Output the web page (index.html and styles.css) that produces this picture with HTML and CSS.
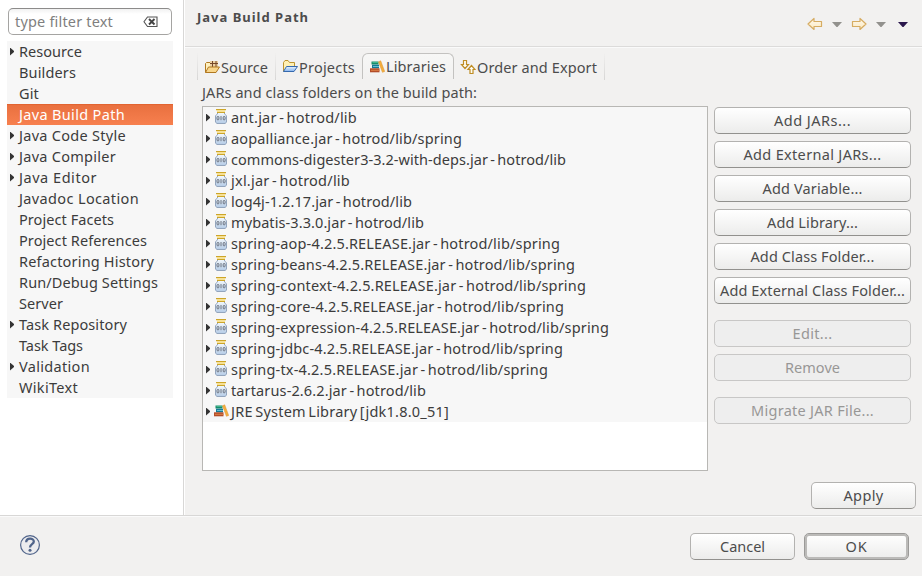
FILE: index.html
```
<!DOCTYPE html>
<html lang="en">
<head>
<meta charset="utf-8">
<title>Java Build Path</title>
<link rel="stylesheet" href="styles.css">
</head>
<body>
<svg class="defs" width="0" height="0">
  <defs>
    <linearGradient id="glass" x1="0" y1="0" x2="0" y2="1"><stop offset="0" stop-color="#f4f9fd"/><stop offset="1" stop-color="#b4cbe6"/></linearGradient>
    <linearGradient id="cream" x1="0" y1="0" x2="0" y2="1"><stop offset="0" stop-color="#fffaf0"/><stop offset="1" stop-color="#fbe8bd"/></linearGradient>
    <linearGradient id="blue" x1="0" y1="0" x2="0" y2="1"><stop offset="0" stop-color="#e9f3fd"/><stop offset="1" stop-color="#84b3ee"/></linearGradient>
    <symbol id="jar" viewBox="0 0 16 16">
      <path d="M4.500 3.500h7v1.500l2 1.700v6.500l-1.500 1.300H4l-1.500-1.300V6.700l2-1.700z" fill="url(#glass)" stroke="#93a5bd"/>
      <path d="M3 .7h10M4 3.300h8" stroke="#cda528" stroke-width="1.200"/><path d="M4 2h8" stroke="#f9e184" stroke-width="1.400"/>
      <g fill="none" stroke="#555b66" stroke-width=".8"><rect x="4" y="7.500" width="1.900" height="3.300" rx=".7"/><path d="M8 7v4.200"/><rect x="10.200" y="7.500" width="1.900" height="3.300" rx=".7"/></g>
    </symbol>
    <symbol id="books" viewBox="0 0 16 16">
      <path d="M2.500 2.500h7v3h-7z" fill="#168c68"/><path d="M3.500 3.500h6" stroke="#42b690"/>
      <path d="M3 5.700h7v3.600H3z" fill="#147a96"/><path d="M4 7.500h6" stroke="#65bfd0"/>
      <path d="M1 9.300h9.500v4H1z" fill="#b34d28"/><path d="M2 11.300h8.500" stroke="#dd8047"/>
      <path d="M9.500 2.800l2.200-1 4 10.700-2.300.8z" fill="#f3ae3d" stroke="#dc9330" stroke-width=".5"/>
    </symbol>
    <symbol id="down" viewBox="0 0 10 6"><path d="M0 0h10L5.500 5h-1z" fill="currentColor"/></symbol>
  </defs>
</svg>
<div class="upper">
  <aside class="side">
    <div class="filter"><span class="fit" data-w="98">type filter text</span>
      <svg width="15" height="12" viewBox="0 0 15 12"><path d="M4.500 1h9.500v9.500H4.500L1 5.800z" fill="#fff" stroke="#555" stroke-width="1.100"/><path d="M6 3l5.500 5.500M11.500 3L6 8.500" stroke="#444" stroke-width="1.900"/></svg>
    </div>
    <ul class="tree" id="tree"></ul>
  </aside>
  <main class="main">
    <header class="head">
      <h1><span class="fit" data-w="112">Java Build Path</span></h1>
      <nav class="nav">
        <svg width="16" height="14" viewBox="0 0 16 14"><path d="M1 7l6-5.500v3h7.500v5H7v3z" fill="url(#cream)" stroke="#d6ac62" stroke-linejoin="round" stroke-width="1.200"/></svg>
        <svg class="arr first" width="10" height="6"><use href="#down"/></svg>
        <svg width="16" height="14" viewBox="0 0 16 14"><path d="M15 7L9 1.500v3H1.500v5H9v3z" fill="url(#cream)" stroke="#d6ac62" stroke-linejoin="round" stroke-width="1.200"/></svg>
        <svg class="arr" width="10" height="6"><use href="#down"/></svg>
        <svg class="arr dark" width="10" height="6"><use href="#down"/></svg>
      </nav>
    </header>
    <div class="tabs">
      <div class="tab source">
        <svg width="16" height="16" viewBox="0 0 16 16"><path d="M1.500 13.500v-9l1-1h4l1 1.500h6v2" fill="#fff0bd" stroke="#b17820"/><path d="M6 2h8v6H6z" fill="#ecd0a1"/><path d="M6 4.500h8M8.500 2v6M12 2v6" stroke="#754729"/><path d="M1.500 13.500l3-5.500h11l-3.500 5.500z" fill="#f9d68b" stroke="#b17820"/></svg>
        <span class="fit" data-w="47">Source</span></div>
      <div class="tab projects">
        <svg width="16" height="16" viewBox="0 0 16 16"><path d="M1.500 12.500v-9l1.500-2h3l1.500 2h5v4" fill="#fff0b3" stroke="#bd932f"/><path d="M1.500 12.500l3-5h11l-3.500 5z" fill="url(#blue)" stroke="#3569ae"/></svg>
        <span class="fit" data-w="56">Projects</span></div>
      <div class="tab active">
        <svg width="16" height="16"><use href="#books"/></svg>
        <span class="fit" data-w="60">Libraries</span></div>
      <div class="tab order">
        <svg width="16" height="16" viewBox="0 0 16 16"><g fill="#fffdf3" stroke="#bf8d24" stroke-width="1.200"><path d="M3.500 1.500h3v4h2L5 9.500 1.500 5.500h2z"/><path d="M10 14.500h3v-4h2l-3.500-4L8 10.500h2z"/></g></svg>
        <span class="fit" data-w="120">Order and Export</span></div>
    </div>
    <p class="caption"><span class="fit" data-w="275">JARs and class folders on the build path:</span></p>
    <div class="body">
      <ul class="jars" id="jars"></ul>
      <div class="actions">
        <button><span class="fit" data-w="77">Add JARs...</span></button>
        <button><span class="fit" data-w="138">Add External JARs...</span></button>
        <button><span class="fit" data-w="100">Add Variable...</span></button>
        <button><span class="fit" data-w="91">Add Library...</span></button>
        <button><span class="fit" data-w="124">Add Class Folder...</span></button>
        <button><span class="fit" data-w="185">Add External Class Folder...</span></button>
        <button class="gap" disabled><span class="fit" data-w="40">Edit...</span></button>
        <button disabled><span class="fit" data-w="55">Remove</span></button>
        <button class="gap" disabled><span class="fit" data-w="123">Migrate JAR File...</span></button>
      </div>
    </div>
    <div class="apply"><button><span class="fit" data-w="40">Apply</span></button></div>
  </main>
</div>
<footer class="foot">
  <svg class="help" width="22" height="22" viewBox="0 0 22 22"><circle cx="11" cy="11" r="9.400" fill="#ececee" stroke="#50648a" stroke-width="1.200"/><path d="M7.200 8.300C7.200 3.600 15 3.700 14.800 7.600c-.1 2.700-3.800 2.400-3.800 5.800" fill="none" stroke="#50648a" stroke-width="2.300"/><circle cx="11" cy="16.300" r="1.500" fill="#50648a"/></svg>
  <button><span class="fit" data-w="45">Cancel</span></button>
  <button class="ok"><span class="fit" data-w="22">OK</span></button>
</footer>
<script src="script.js"></script>
</body>
</html>
```
FILE: styles.css
```
* { box-sizing: border-box; }
body { margin: 0; width: 922px; height: 576px; overflow: hidden; display: flex; flex-direction: column; background: #f2f1f0; color: #4c4c4c; font: 14.5px/21px "Noto Sans", "Open Sans", sans-serif; }
.defs { position: absolute; }
svg { flex: none; display: block; }
ul { list-style: none; margin: 0; padding: 0; }
.fit { display: inline-block; white-space: pre; }
.upper { display: flex; height: 515px; }
.side { width: 184px; background: #fff; border-right: 1px solid #d8d7d6; padding: 8px 10px 0 7px; }
.filter { display: flex; align-items: center; justify-content: space-between; width: 164px; height: 27px; margin-left: 1px; padding: 0 13px 0 6px; border: 1px solid #a5a4a2; border-top-color: #8c8b8a; border-radius: 5px; background: linear-gradient(#f1f1f1, #fff 5px); color: #7f7f7f; }
.tree { margin-top: 6px; width: 166px; background: #f7f7f7; color: #3c3c3c; }
.tree li { height: 21px; display: flex; align-items: center; padding-left: 3px; }
.twist { width: 4px; height: 8px; margin-right: 5px; }
.twist.on { background: #333; clip-path: polygon(0 0, 100% 43%, 100% 57%, 0 100%); }
.tree .sel { background: linear-gradient(#e26431 1px, #e9703f 1px, #f7804f); color: #fff; }
.main { flex: 1; border-left: 1px solid #fff; }
.head { height: 47px; border-bottom: 1px solid #dcdbda; display: flex; justify-content: space-between; padding: 7px 14px 0 12px; }
h1 { margin: 0; font-size: 13px; line-height: 21px; font-weight: bold; }
.nav { display: flex; align-items: center; height: 14px; margin-top: 10px; }
.arr { color: #92918d; margin: 1px 9px 0 9px; }
.nav .arr.first { margin-left: 9px; }
.nav .arr.dark { color: #2b174c; margin: 1px 0 0 3px; }
.tabs { display: flex; height: 33px; padding: 5px 0 0 12px; border-top: 1px solid #fafafa; }
.tab { display: flex; align-items: center; height: 27px; padding: 1px 0 0 6px; }
.tab svg { margin-right: 1px; }
.source { width: 79px; border-left: 1px solid; border-right: 1px solid; border-image: linear-gradient(#f2f1f0, #d6d5d4) 1; }
.projects { width: 86px; }
.active { width: 92px; height: 26px; border: 1px solid #c3c2c0; border-bottom: 0; border-radius: 6px 6px 0 0; background: linear-gradient(#f7f7f6, #f2f1f0); padding-top: 0; }
.order { width: 151px; border-right: 1px solid; border-image: linear-gradient(#f2f1f0, #d6d5d4) 1; }
.caption { margin: 0; height: 26px; padding: 2px 0 0 17px; }
.body { display: flex; gap: 6px; height: 365px; padding-left: 17px; }
.jars { width: 506px; border: 1px solid #b8b7b4; background: #fff; color: #3c3c3c; word-spacing: -1.500px; }
.jars li { display: flex; align-items: center; height: 21px; padding-left: 3px; background: #f7f7f7; }
.jars .twist { margin-right: 3px; }
.jars li svg { margin: 0 2px 1px 0; }
.actions { display: flex; flex-direction: column; gap: 7px; padding-top: 1px; }
button { width: 197px; height: 27px; padding: 0; border: 1px solid #b3b2b0; border-bottom-color: #92918e; border-radius: 5px; background: linear-gradient(#fff, #ececeb); color: inherit; font: inherit; line-height: 25px; white-space: nowrap; }
button:disabled { border-color: #c8c7c6; background: #eee; color: #989796; }
.actions .gap { margin-top: 9px; }
.apply { display: flex; justify-content: flex-end; padding: 11px 6px 0 0; }
.apply button, .foot button { width: 105px; }
.foot { flex: 1; display: flex; border-top: 1px solid #d8d7d6; box-shadow: inset 0 1px #fafafa; padding: 17px 13px 0 19px; gap: 9px; }
.help { margin: 1px auto 0 0; }
.foot .ok { border: 1px solid #9b9a98; box-shadow: inset 0 0 0 2px #bbbab8; }
```
FILE: script.js
```
// Preference pages: label, label width, expandable, selected
const pages = [
  ["Resource", 63, 1], ["Builders", 57], ["Git", 20], ["Java Build Path", 106, 0, 1],
  ["Java Code Style", 107, 1], ["Java Compiler", 97, 1], ["Java Editor", 78, 1],
  ["Javadoc Location", 120], ["Project Facets", 95], ["Project References", 128],
  ["Refactoring History", 135], ["Run/Debug Settings", 139], ["Server", 44],
  ["Task Repository", 108, 1], ["Task Tags", 64], ["Validation", 71, 1], ["WikiText", 59]
];
const jars = [
  ["ant.jar - hotrod/lib", 126], ["aopalliance.jar - hotrod/lib/spring", 231],
  ["commons-digester3-3.2-with-deps.jar - hotrod/lib", 335], ["jxl.jar - hotrod/lib", 119],
  ["log4j-1.2.17.jar - hotrod/lib", 181], ["mybatis-3.3.0.jar - hotrod/lib", 193],
  ["spring-aop-4.2.5.RELEASE.jar - hotrod/lib/spring", 329],
  ["spring-beans-4.2.5.RELEASE.jar - hotrod/lib/spring", 344],
  ["spring-context-4.2.5.RELEASE.jar - hotrod/lib/spring", 355],
  ["spring-core-4.2.5.RELEASE.jar - hotrod/lib/spring", 333],
  ["spring-expression-4.2.5.RELEASE.jar - hotrod/lib/spring", 378],
  ["spring-jdbc-4.2.5.RELEASE.jar - hotrod/lib/spring", 332],
  ["spring-tx-4.2.5.RELEASE.jar - hotrod/lib/spring", 317],
  ["tartarus-2.6.2.jar - hotrod/lib", 195], ["JRE System Library [jdk1.8.0_51]", 218, "books"]
];
document.getElementById("tree").innerHTML = pages.map(([t, w, open, sel]) =>
  `<li class="${sel ? "sel" : ""}"><i class="twist ${open ? "on" : ""}"></i><span class="fit" data-w="${w}">${t}</span></li>`).join("");
document.getElementById("jars").innerHTML = jars.map(([t, w, icon]) =>
  `<li><i class="twist on"></i><svg width="16" height="16"><use href="#${icon || "jar"}"/></svg><span class="fit" data-w="${w}">${t}</span></li>`).join("");
document.querySelectorAll(".fit").forEach(el => {
  const n = el.textContent.length;
  el.style.letterSpacing = (el.dataset.w - el.getBoundingClientRect().width) / n + "px";
});
```
